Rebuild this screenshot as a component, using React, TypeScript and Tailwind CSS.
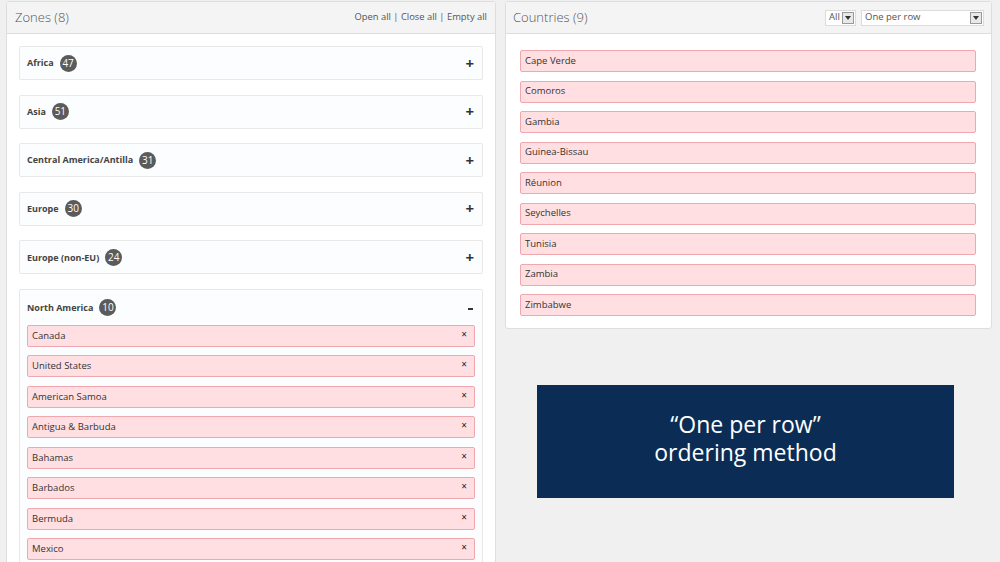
import React from 'react';

const zones = [
  { name: 'Africa', count: 47 },
  { name: 'Asia', count: 51 },
  { name: 'Central America/Antilla', count: 31 },
  { name: 'Europe', count: 30 },
  { name: 'Europe (non-EU)', count: 24 },
];

const northAmerica = [
  'Canada',
  'United States',
  'American Samoa',
  'Antigua & Barbuda',
  'Bahamas',
  'Barbados',
  'Bermuda',
  'Mexico',
  'Puerto Rico',
  'Virgin Islands',
];

const countries = [
  'Cape Verde',
  'Comoros',
  'Gambia',
  'Guinea-Bissau',
  'Réunion',
  'Seychelles',
  'Tunisia',
  'Zambia',
  'Zimbabwe',
];

const Badge = ({ n }: { n: number }) => (
  <span className="ml-[6px] flex h-[17px] w-[17px] items-center justify-center rounded-full bg-[#5b5b5b] text-[10px] font-normal text-white">
    {n}
  </span>
);

const Select = ({ label, width }: { label: string; width: string }) => (
  <div className={`flex h-[16px] items-center justify-between border border-[#dcdcdc] bg-white pl-[3px] pr-[1px] text-[9.5px] text-[#555] ${width}`}>
    <span>{label}</span>
    <span className="flex h-[12px] w-[12px] items-center justify-center border border-[#999] bg-[#e8e8e8]">
      <svg width="6" height="4" viewBox="0 0 6 4">
        <path d="M0 0h6L3 4z" fill="#333" />
      </svg>
    </span>
  </div>
);

const App = () => {
  return (
    <div
      className="flex h-[562px] w-[1000px] gap-[9px] overflow-hidden bg-[#f0f0f1] pl-[6px] pt-[1px]"
      style={{ fontFamily: '"Open Sans", "Noto Sans", sans-serif' }}
    >
      {/* Zones panel */}
      <div className="flex w-[490px] flex-col self-start rounded-[3px] border border-[#dedede] bg-white">
        <div className="flex h-[32px] items-center justify-between border-b border-[#dedede] bg-[#f4f4f4] px-[8px]">
          <span className="text-[13px] font-light text-[#555]">Zones (8)</span>
          <span className="text-[9.4px] text-[#555]">Open all | Close all | Empty all</span>
        </div>
        <div className="flex flex-col gap-[14.6px] px-[12px] pt-[12px]">
          {zones.map((z) => (
            <div
              key={z.name}
              className="flex h-[34px] shrink-0 items-center justify-between rounded-[2px] border border-[#e8e8e8] bg-[#fcfdfe] pl-[7px] pr-[8px]"
            >
              <div className="flex items-center text-[9px] font-bold text-[#444]">
                {z.name}
                <Badge n={z.count} />
              </div>
              <span className="text-[15px] font-bold leading-none text-[#333]">+</span>
            </div>
          ))}
          <div className="flex flex-col rounded-[2px] border border-[#e8e8e8] bg-[#fcfdfe] px-[7px] pb-[8px]">
            <div className="flex h-[35px] shrink-0 items-center justify-between">
              <div className="flex items-center text-[9px] font-bold text-[#444]">
                North America
                <Badge n={10} />
              </div>
              <span className="mr-[2px] mt-[4px] h-[2px] w-[5px] bg-[#333]" />
            </div>
            <div className="flex flex-col gap-[8.5px]">
              {northAmerica.map((c) => (
                <div
                  key={c}
                  className="flex h-[22px] shrink-0 items-center justify-between rounded-[2px] border border-[#f0a8ae] bg-[#ffdfe1] pl-[4px] pr-[7px] text-[9.5px] text-[#333]"
                >
                  <span>{c}</span>
                  <span className="-mt-[4px] text-[10px] leading-none text-[#222]">×</span>
                </div>
              ))}
            </div>
          </div>
        </div>
      </div>

      {/* Countries column */}
      <div className="flex w-[487px] flex-col">
        <div className="flex flex-col rounded-[3px] border border-[#dedede] bg-white">
          <div className="flex h-[32px] items-center justify-between border-b border-[#dedede] bg-[#f4f4f4] pl-[7px] pr-[7px]">
            <span className="text-[13px] font-light text-[#555]">Countries (9)</span>
            <div className="flex items-center gap-[5px]">
              <Select label="All" width="w-[31px]" />
              <Select label="One per row" width="w-[123px]" />
            </div>
          </div>
          <div className="flex flex-col gap-[8.5px] pb-[12px] pl-[14px] pr-[15px] pt-[16px]">
            {countries.map((c) => (
              <div
                key={c}
                className="flex h-[22px] shrink-0 items-center rounded-[2px] border border-[#f0a8ae] bg-[#ffdfe1] pl-[4px] text-[9.5px] text-[#333]"
              >
                {c}
              </div>
            ))}
          </div>
        </div>

        <div className="ml-[32px] mt-[56px] flex h-[113px] w-[417px] flex-col items-center justify-center bg-[#0b2d55] pb-[8px] text-[23px] font-normal leading-[28px] text-white">
          <span>“One per row”</span>
          <span>ordering method</span>
        </div>
      </div>
    </div>
  );
};

export default App;
